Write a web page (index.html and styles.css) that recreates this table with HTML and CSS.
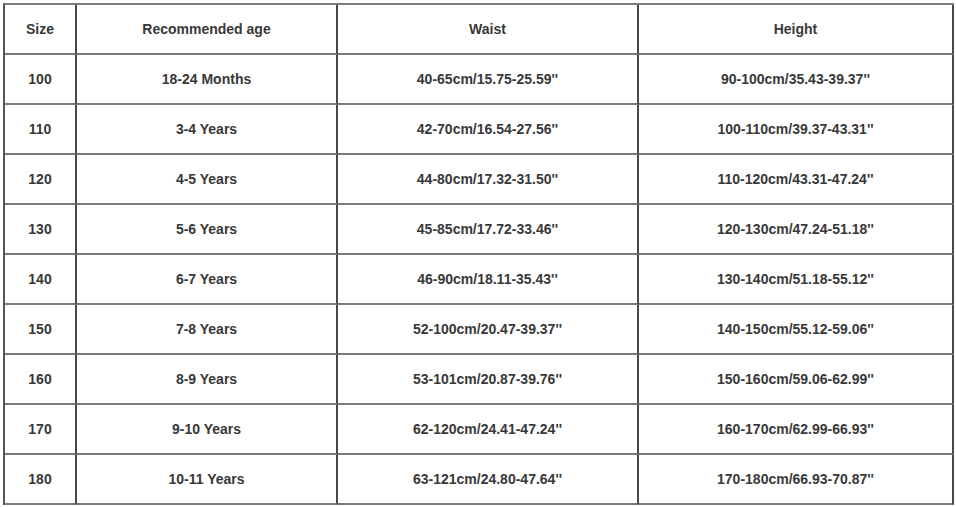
FILE: index.html
```html
<!DOCTYPE html>
<html>
<head>
<meta charset="utf-8">
<link rel="stylesheet" href="styles.css">
</head>
<body>
<table class="size-table">
  <colgroup>
    <col class="c1"><col class="c2"><col class="c3"><col class="c4">
  </colgroup>
  <tr><td>Size</td><td>Recommended age</td><td>Waist</td><td>Height</td></tr>
  <tr><td>100</td><td>18-24 Months</td><td>40-65cm/15.75-25.59''</td><td>90-100cm/35.43-39.37''</td></tr>
  <tr><td>110</td><td>3-4 Years</td><td>42-70cm/16.54-27.56''</td><td>100-110cm/39.37-43.31''</td></tr>
  <tr><td>120</td><td>4-5 Years</td><td>44-80cm/17.32-31.50''</td><td>110-120cm/43.31-47.24''</td></tr>
  <tr><td>130</td><td>5-6 Years</td><td>45-85cm/17.72-33.46''</td><td>120-130cm/47.24-51.18''</td></tr>
  <tr><td>140</td><td>6-7 Years</td><td>46-90cm/18.11-35.43''</td><td>130-140cm/51.18-55.12''</td></tr>
  <tr><td>150</td><td>7-8 Years</td><td>52-100cm/20.47-39.37''</td><td>140-150cm/55.12-59.06''</td></tr>
  <tr><td>160</td><td>8-9 Years</td><td>53-101cm/20.87-39.76''</td><td>150-160cm/59.06-62.99''</td></tr>
  <tr><td>170</td><td>9-10 Years</td><td>62-120cm/24.41-47.24''</td><td>160-170cm/62.99-66.93''</td></tr>
  <tr><td>180</td><td>10-11 Years</td><td>63-121cm/24.80-47.64''</td><td>170-180cm/66.93-70.87''</td></tr>
</table>
</body>
</html>
```
FILE: styles.css
```css
html, body {
  margin: 0;
  padding: 0;
  background: #ffffff;
}
body {
  padding: 3px 0 0 3px;
}
.size-table {
  border-collapse: separate;
  border-spacing: 0;
  table-layout: fixed;
  width: 951px;
  border-top: 2px solid #7a7a7a;
  border-left: 2px solid #555555;
  font-family: "Liberation Sans", Arial, sans-serif;
  font-size: 14px;
  font-weight: bold;
  color: #383838;
}
.c1 { width: 72px; }
.c2 { width: 261px; }
.c3 { width: 301px; }
.c4 { width: 315px; }
.size-table td {
  box-sizing: border-box;
  height: 50px;
  padding: 0;
  text-align: center;
  vertical-align: middle;
  border-right: 2px solid #484848;
  border-bottom: 2px solid #7a7a7a;
}
```
